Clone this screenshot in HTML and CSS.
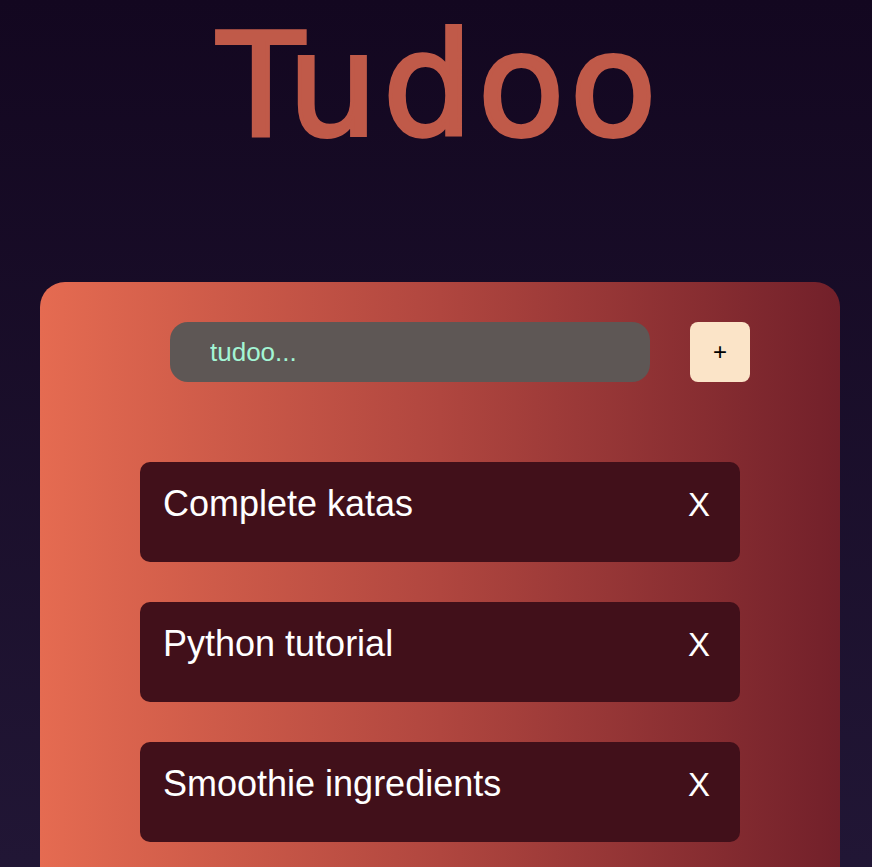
FILE: index.html
```html
<!DOCTYPE html>
<html lang="en">
<head>
<meta charset="utf-8">
<title>Tudoo</title>
<link rel="stylesheet" href="styles.css">
</head>
<body>
  <h1 class="title">Tudoo</h1>
  <main class="card">
    <form class="add-row" onsubmit="return false">
      <input class="add-input" type="text" placeholder="tudoo...">
      <button class="add-btn" type="submit">+</button>
    </form>
    <ul class="list">
      <li class="item"><span class="item-text">Complete katas</span><button class="del">X</button></li>
      <li class="item"><span class="item-text">Python tutorial</span><button class="del">X</button></li>
      <li class="item"><span class="item-text">Smoothie ingredients</span><button class="del">X</button></li>
    </ul>
  </main>
</body>
</html>
```
FILE: styles.css
```css
html, body {
  margin: 0;
  padding: 0;
}
body {
  min-height: 100vh;
  background: linear-gradient(to bottom, #130720 0%, #231838 100%);
  font-family: "Liberation Sans", Arial, sans-serif;
  overflow: hidden;
}
.title {
  margin: 12px 0 0;
  text-align: center;
  font-family: "DejaVu Sans", "Liberation Sans", sans-serif;
  font-weight: 400;
  font-size: 142px;
  line-height: 148px;
  letter-spacing: 5px;
  color: #c05a49;
  -webkit-text-stroke: 4px #c05a49;
  padding-left: 7px;
}
.card {
  margin: 122px 0 0 40px;
  width: 800px;
  min-height: 700px;
  box-sizing: border-box;
  padding-top: 40px;
  border-radius: 25px;
  background: linear-gradient(to right, #e56b51 0%, #b0463f 50%, #72202a 100%);
}
.add-row {
  margin: 0;
  display: flex;
  justify-content: center;
  gap: 40px;
  padding-left: 40px;
}
.add-input {
  width: 480px;
  height: 60px;
  box-sizing: border-box;
  border: none;
  outline: none;
  border-radius: 18px;
  background: #5e5755;
  padding: 0 0 0 40px;
  font-family: "Liberation Sans", Arial, sans-serif;
  font-size: 26px;
  color: #a3f5d4;
}
.add-input::placeholder {
  color: #a3f5d4;
  opacity: 1;
}
.add-btn {
  width: 60px;
  height: 60px;
  border: none;
  border-radius: 8px;
  background: #fbe4c8;
  color: #000;
  font-family: "Liberation Sans", Arial, sans-serif;
  font-size: 24px;
  padding: 0;
}
.list {
  list-style: none;
  margin: 80px 0 0;
  padding: 0;
  display: flex;
  flex-direction: column;
  align-items: center;
  gap: 40px;
}
.item {
  width: 600px;
  height: 100px;
  box-sizing: border-box;
  padding: 21px 30px 0 23px;
  border-radius: 10px;
  background: #41101a;
  display: flex;
  justify-content: space-between;
  align-items: baseline;
  color: #fff;
}
.item-text {
  font-size: 36px;
}
.del {
  border: none;
  background: none;
  padding: 0;
  color: #fff;
  font-family: "Liberation Sans", Arial, sans-serif;
  font-size: 33px;
}
```
